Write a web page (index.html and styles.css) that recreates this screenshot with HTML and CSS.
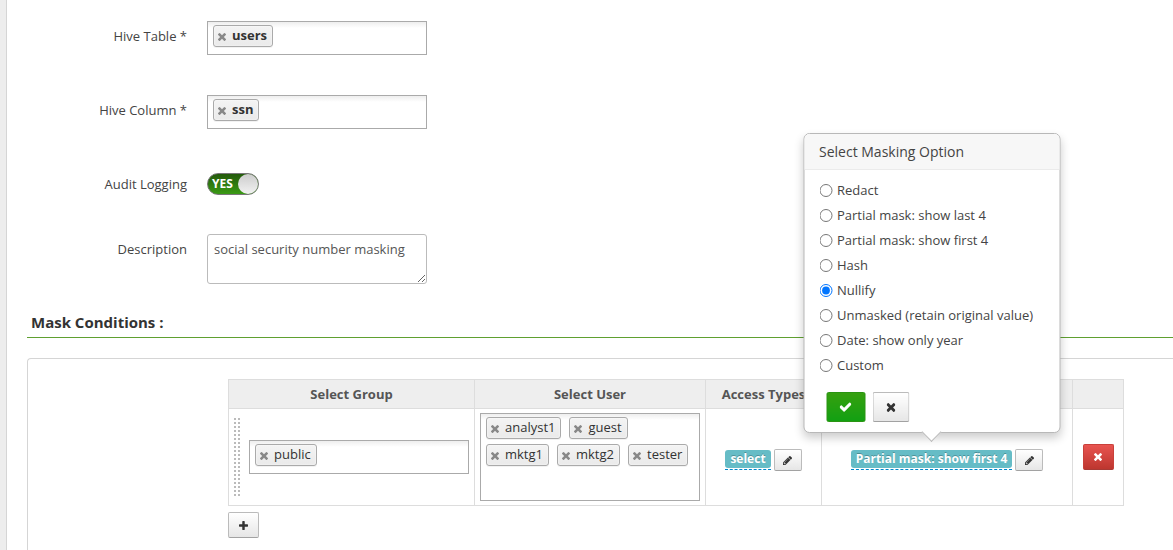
FILE: index.html
```html
<!DOCTYPE html>
<html lang="en">
<head>
<meta charset="utf-8">
<meta name="viewport" content="width=device-width, initial-scale=1">
<title>Edit Masking Policy</title>
<link rel="stylesheet" href="styles.css">
</head>
<body>
<svg class="sprite" aria-hidden="true">
  <symbol id="i-times" viewBox="110 366 1188 1188"><path d="M1298 1322q0 40 -28 68l-136 136q-28 28 -68 28t-68 -28l-294 -294l-294 294q-28 28 -68 28t-68 -28l-136 -136q-28 -28 -28 -68t28 -68l294 -294l-294 -294q-28 -28 -28 -68t28 -68l136 -136q28 -28 68 -28t68 28l294 294l294 -294q28 -28 68 -28t68 28l136 136q28 28 28 68t-28 68l-294 294l294 294q28 28 28 68z"/></symbol>
  <symbol id="i-check" viewBox="121 306 1550 1216"><path d="M1671 566q0 40 -28 68l-724 724l-136 136q-28 28 -68 28t-68 -28l-136 -136l-362 -362q-28 -28 -28 -68t28 -68l136 -136q28 -28 68 -28t68 28l294 295l656 -657q28 -28 68 -28t68 28l136 136q28 28 28 68z"/></symbol>
  <symbol id="i-plus" viewBox="192 128 1408 1408"><path d="M1600 736v192q0 40 -28 68t-68 28h-416v416q0 40 -28 68t-68 28h-192q-40 0 -68 -28t-28 -68v-416h-416q-40 0 -68 -28t-28 -68v-192q0 -40 28 -68t68 -28h416v-416q0 -40 28 -68t68 -28h192q40 0 68 28t28 68v416h416q40 0 68 28t28 68z"/></symbol>
  <symbol id="i-pencil" viewBox="128 149 1515 1515"><path d="M491 1536l91 -91l-235 -235l-91 91v107h128v128h107zM1014 608q0 -22 -22 -22q-10 0 -17 7l-542 542q-7 7 -7 17q0 22 22 22q10 0 17 -7l542 -542q7 -7 7 -17zM960 416l416 416l-832 832h-416v-416zM1643 512q0 53 -37 90l-166 166l-416 -416l166 -165q36 -38 90 -38q53 0 91 38l235 234q37 39 37 91z"/></symbol>
</svg>
<main class="page">
  <form class="policy">
    <div class="row">
      <span class="row-label" id="l-table">Hive Table *</span>
      <ul class="tags tags-strong" aria-labelledby="l-table">
        <li class="tag"><button type="button" class="tag-x" aria-label="Remove users"><svg class="icon"><use href="#i-times"/></svg></button>users</li>
      </ul>
    </div>
    <div class="row">
      <span class="row-label" id="l-column">Hive Column *</span>
      <ul class="tags tags-strong" aria-labelledby="l-column">
        <li class="tag"><button type="button" class="tag-x" aria-label="Remove ssn"><svg class="icon"><use href="#i-times"/></svg></button>ssn</li>
      </ul>
    </div>
    <div class="row row-toggle">
      <label class="row-label" for="audit">Audit Logging</label>
      <label class="toggle"><input type="checkbox" id="audit" class="toggle-input" checked>YES<span class="toggle-knob"></span></label>
    </div>
    <div class="row row-last">
      <label class="row-label" for="description">Description</label>
      <textarea class="description" id="description">social security number masking</textarea>
    </div>

    <h2 class="heading">Mask Conditions :</h2>

    <section class="panel">
      <table class="conditions">
        <thead>
          <tr>
            <th class="c-group">Select Group</th>
            <th class="c-user">Select User</th>
            <th class="c-access">Access Types</th>
            <th class="c-mask" aria-label="Masking option"></th>
            <th class="c-remove" aria-label="Remove"></th>
          </tr>
        </thead>
        <tbody>
          <tr>
            <td>
              <div class="group">
                <span class="grip"></span>
                <ul class="tags">
                  <li class="tag"><button type="button" class="tag-x" aria-label="Remove public"><svg class="icon"><use href="#i-times"/></svg></button>public</li>
                </ul>
              </div>
            </td>
            <td>
              <ul class="tags tags-tall">
                <li class="tag"><button type="button" class="tag-x" aria-label="Remove analyst1"><svg class="icon"><use href="#i-times"/></svg></button>analyst1</li>
                <li class="tag"><button type="button" class="tag-x" aria-label="Remove guest"><svg class="icon"><use href="#i-times"/></svg></button>guest</li>
                <li class="tag"><button type="button" class="tag-x" aria-label="Remove mktg1"><svg class="icon"><use href="#i-times"/></svg></button>mktg1</li>
                <li class="tag"><button type="button" class="tag-x" aria-label="Remove mktg2"><svg class="icon"><use href="#i-times"/></svg></button>mktg2</li>
                <li class="tag"><button type="button" class="tag-x" aria-label="Remove tester"><svg class="icon"><use href="#i-times"/></svg></button>tester</li>
              </ul>
            </td>
            <td>
              <div class="choice">
                <a class="choice-link" href="#access"><span class="badge">select</span></a>
                <button type="button" class="btn btn-mini" aria-label="Edit access types"><svg class="icon"><use href="#i-pencil"/></svg></button>
              </div>
            </td>
            <td>
              <div class="choice">
                <div class="anchor">
                  <a class="choice-link" href="#mask"><span class="badge">Partial mask: show first 4</span></a>
                  <div class="popover" role="dialog" aria-labelledby="pop-title">
                    <h3 class="popover-title" id="pop-title">Select Masking Option</h3>
                    <div class="popover-body">
                      <label class="option"><input type="radio" name="mask" class="radio">Redact</label>
                      <label class="option"><input type="radio" name="mask" class="radio">Partial mask: show last 4</label>
                      <label class="option"><input type="radio" name="mask" class="radio">Partial mask: show first 4</label>
                      <label class="option"><input type="radio" name="mask" class="radio">Hash</label>
                      <label class="option"><input type="radio" name="mask" class="radio" checked>Nullify</label>
                      <label class="option"><input type="radio" name="mask" class="radio">Unmasked (retain original value)</label>
                      <label class="option"><input type="radio" name="mask" class="radio">Date: show only year</label>
                      <label class="option"><input type="radio" name="mask" class="radio">Custom</label>
                      <div class="actions">
                        <button type="button" class="btn btn-ok" aria-label="Apply"><svg class="icon"><use href="#i-check"/></svg></button>
                        <button type="button" class="btn btn-cancel" aria-label="Cancel"><svg class="icon"><use href="#i-times"/></svg></button>
                      </div>
                    </div>
                  </div>
                </div>
                <button type="button" class="btn btn-mini" aria-label="Edit masking option"><svg class="icon"><use href="#i-pencil"/></svg></button>
              </div>
            </td>
            <td>
              <button type="button" class="btn btn-small btn-danger" aria-label="Remove condition"><svg class="icon"><use href="#i-times"/></svg></button>
            </td>
          </tr>
        </tbody>
      </table>
      <button type="button" class="btn btn-small" aria-label="Add condition"><svg class="icon"><use href="#i-plus"/></svg></button>
    </section>
  </form>
</main>
</body>
</html>
```
FILE: styles.css
```css
*, *::before, *::after { box-sizing: border-box; }

body {
  margin: 0;
  background: #ededed;
  color: #444;
  font: 13px/20px "Open Sans", "Noto Sans", sans-serif;
  overflow: hidden;
}

.sprite { display: none; }
.icon { display: block; width: 9px; height: 9px; fill: currentColor; }

.page {
  min-height: 100vh;
  margin-left: 6px;
  border-left: 1px solid #d5d5d5;
  background: #fff;
  display: flex;
}

.policy {
  flex: 1;
  min-width: 0;
  display: flex;
  flex-direction: column;
  padding: 21px 0 0 20px;
}

/* Form rows */
.row { display: flex; align-items: flex-start; gap: 20px; margin-bottom: 40px; }
.row-label { width: 160px; padding-top: 5px; text-align: right; }
.row-toggle { margin-bottom: 35px; height: 30px; }
.row-last { margin-bottom: 28px; }

.tags {
  display: flex;
  flex-wrap: wrap;
  align-content: flex-start;
  gap: 5px 8px;
  width: 220px;
  min-height: 34px;
  margin: 0;
  padding: 3px 5px;
  list-style: none;
  border: 1px solid #aaa;
  background: linear-gradient(#eee 0, #fff 6px);
}
.tags-tall { min-height: 88px; }
.tags-strong { font-weight: 700; }

.tag {
  display: flex;
  align-items: center;
  height: 22px;
  padding: 0 5px 2px 0;
  border: 1px solid #aaa;
  border-radius: 3px;
  background: linear-gradient(#f4f4f4, #eaeaea);
  box-shadow: inset 0 0 2px #fff, 0 1px 0 rgba(0, 0, 0, .05);
  color: #333;
  line-height: 18px;
}
.tag-x {
  padding: 4px 6px 0 4px;
  border: 0;
  background: none;
  color: #888;
}
.tag-x .icon { width: 8px; height: 8px; }

.toggle {
  display: flex;
  align-items: center;
  justify-content: space-between;
  width: 52px;
  height: 22px;
  margin-top: 4px;
  padding-left: 4px;
  border: 1px solid #777;
  border-radius: 11px;
  background: linear-gradient(#245a0c, #3a9a14);
  color: #fff;
  font-size: 12px;
  font-weight: 700;
}
.toggle-input { position: absolute; opacity: 0; margin: 0; }
.toggle-knob {
  width: 20px;
  height: 20px;
  border-radius: 50%;
  background: linear-gradient(#ccc, #f2f2f2);
}

.description {
  display: block;
  width: 220px;
  height: 50px;
  padding: 4px 6px;
  border: 1px solid #bbb;
  border-radius: 3px;
  background: #fff;
  color: #555;
  font: inherit;
  resize: vertical;
}

.heading {
  margin: 0 0 20px;
  padding: 0 4px 5px;
  border-bottom: 1px solid #5fa030;
  color: #333;
  font-size: 15px;
  line-height: 20px;
}

/* Conditions */
.panel {
  flex: 1;
  padding: 20px 0 0 200px;
  border: solid #d5d5d5;
  border-width: 1px 0 0 1px;
  border-radius: 4px 0 0 0;
}

.conditions { border-collapse: collapse; margin-bottom: 6px; }
.conditions th, .conditions td { border: 1px solid #ddd; padding: 4px 5px; }
.conditions th { background: #eee; color: #555; white-space: nowrap; }
.c-group { width: 246px; }
.c-user { width: 231px; }
.c-access { width: 116px; }
.c-mask { width: 251px; }
.c-remove { width: 51px; }
.conditions td .btn-small { margin: 0 auto; }

.group { display: flex; align-items: center; gap: 9px; }
.grip {
  width: 6px;
  height: 78px;
  background:
    linear-gradient(#fff, #fff) 2px 0 / 2px 100% no-repeat,
    repeating-linear-gradient(#bbb 0 2px, #fff 2px 4px);
}

.choice { display: flex; justify-content: center; align-items: center; gap: 3px; padding-top: 6px; }
.anchor { position: relative; }
.choice-link {
  display: block;
  padding-bottom: 1px;
  border-bottom: 1px dashed #08c;
  text-decoration: none;
}
.badge {
  display: block;
  padding: 0 5px;
  border-radius: 3px;
  background: #66bcc6;
  color: #fff;
  font-size: 12px;
  font-weight: 700;
  line-height: 18px;
  text-shadow: 0 -1px 0 rgba(0, 0, 0, .25);
  white-space: nowrap;
}

.btn {
  display: flex;
  align-items: center;
  justify-content: center;
  padding: 0;
  border: 1px solid #bbb;
  border-bottom-color: #a2a2a2;
  border-radius: 2px;
  background: linear-gradient(#fff, #e6e6e6);
  color: #333;
}
.btn-mini { width: 28px; height: 22px; }
.btn-small { width: 31px; height: 26px; }
.btn-danger {
  border-color: #c9403a #c9403a #a83a35;
  background: linear-gradient(#e85450, #bd362f);
  color: #fff;
}
.btn-danger .icon { width: 8px; height: 8px; }
.btn-ok {
  width: 39px;
  height: 30px;
  border-color: #2a9412;
  background: linear-gradient(#36a010, #12a012);
  color: #fff;
}
.btn-ok .icon { width: 12px; height: 10px; }
.btn-cancel { width: 37px; height: 30px; }

/* Popover */
.popover {
  position: absolute;
  z-index: 1;
  bottom: calc(100% + 17px);
  left: 50%;
  width: 257px;
  transform: translateX(-50%);
  border: 1px solid #b8b8b8;
  border-radius: 6px;
  background: #fff;
  box-shadow: 0 5px 10px rgba(0, 0, 0, .2);
}
.popover::after {
  content: "";
  position: absolute;
  top: calc(100% - 7px);
  left: calc(50% - 7px);
  width: 14px;
  height: 14px;
  border: solid #bbb;
  border-width: 0 1px 1px 0;
  background: #fff;
  transform: rotate(45deg);
}
.popover-title {
  margin: 0;
  padding: 9px 15px 8px;
  border-bottom: 1px solid #ebebeb;
  border-radius: 5px 5px 0 0;
  background: #f7f7f7;
  font-size: 14px;
  font-weight: 400;
  line-height: 18px;
}
.popover-body { padding: 7px 15px 10px; }
.option { display: flex; align-items: center; gap: 5px; height: 25px; white-space: nowrap; }
.radio { width: 13px; height: 13px; margin: 2px 0 0; }
.actions { display: flex; gap: 7px; padding: 15px 0 0 7px; }
```
